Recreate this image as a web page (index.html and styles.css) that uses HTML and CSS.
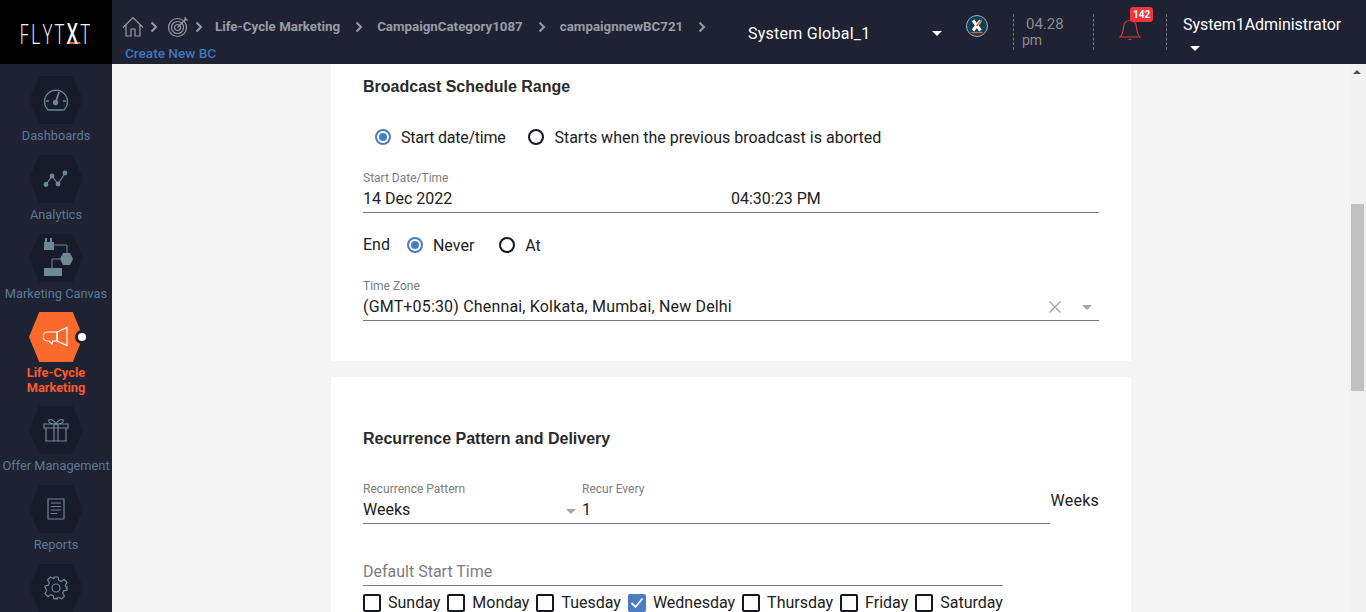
FILE: index.html
```html
<!DOCTYPE html>
<html>
<head>
  <title>Create New BC</title>
  <link rel="stylesheet" href="styles.css">
</head>
<body>
  <header class="topbar">
    <div class="logo"><span class="logo-text">FLYT<span class="logo-x">X</span>T</span></div>
    <div class="crumbs">
      <div class="crumb-row">
        <svg class="crumb-icon" width="22" height="22" viewBox="0 0 22 22" fill="none" stroke="#9a9ca3" stroke-width="1.2"><path d="M1 11.5 11 1.5l10 10"/><path d="M4 9v11h5v-7h4v7h5V9"/></svg>
        <svg class="chev" width="8" height="12" viewBox="0 0 8 12" fill="none" stroke="#9a9ca3" stroke-width="2"><path d="m1.5 1.5 4.5 4.5-4.5 4.5"/></svg>
        <svg class="crumb-icon target" width="22" height="22" viewBox="0 0 22 22" fill="none" stroke="#9a9ca3" stroke-width="1.2"><circle cx="10.5" cy="11.5" r="9"/><circle cx="10.5" cy="11.5" r="6"/><circle cx="10.5" cy="11.5" r="3"/><path d="m10.5 11.5 9-9M18 1v3h3"/></svg>
        <svg class="chev" width="8" height="12" viewBox="0 0 8 12" fill="none" stroke="#9a9ca3" stroke-width="2"><path d="m1.5 1.5 4.5 4.5-4.5 4.5"/></svg>
        <span class="crumb first">Life-Cycle Marketing</span>
        <svg class="chev" width="8" height="12" viewBox="0 0 8 12" fill="none" stroke="#9a9ca3" stroke-width="2"><path d="m1.5 1.5 4.5 4.5-4.5 4.5"/></svg>
        <span class="crumb">CampaignCategory1087</span>
        <svg class="chev" width="8" height="12" viewBox="0 0 8 12" fill="none" stroke="#9a9ca3" stroke-width="2"><path d="m1.5 1.5 4.5 4.5-4.5 4.5"/></svg>
        <span class="crumb">campaignnewBC721</span>
        <svg class="chev" width="8" height="12" viewBox="0 0 8 12" fill="none" stroke="#9a9ca3" stroke-width="2"><path d="m1.5 1.5 4.5 4.5-4.5 4.5"/></svg>
      </div>
      <div class="page-title">Create New BC</div>
    </div>
    <div class="org">
      <span>System Global_1</span>
      <span class="caret white"></span>
    </div>
    <div class="x-badge">
      <svg width="22" height="22" viewBox="0 0 22 22" fill="none"><path d="m7 5.5 7.5 10M14.500 5.5l-7.500 10" stroke="#fff" stroke-width="3"/><path d="m15.500 5-5 6" stroke="#e8622c" stroke-width="1.6"/><path d="M5.500 17.500h11" stroke="#e8622c" stroke-width="1.3"/></svg>
    </div>
    <div class="clock">
      <span class="clock-time">04.28</span>
      <span>pm</span>
    </div>
    <div class="bell">
      <svg width="24" height="26" viewBox="0 0 24 26" fill="none" stroke="#d9363e" stroke-width="1.2"><path d="M2 21c3-3 3-5 3.5-10 .5-4 3-6.5 6.5-6.5s6 2.500 6.500 6.500c.5 5 .5 7 3.500 10z"/><path d="M10.500 23.500h3"/></svg>
      <span class="badge">142</span>
    </div>
    <div class="user">
      <span>System1Administrator</span>
      <span class="caret white"></span>
    </div>
  </header>

  <div class="layout">
    <nav class="sidebar">
      <a class="nav-item">
        <span class="hex"><svg width="26" height="26" viewBox="0 0 26 26" fill="none" stroke="#6f8796" stroke-width="1.3"><path d="M5 23a11.500 11.500 0 1 1 16 0z"/><path d="M13 14.500 16 5" stroke-width="1.8"/><circle cx="12.500" cy="15.500" r="2" fill="#6f8796"/><path d="M3 14h3M20 14h3"/></svg></span>
        <span class="nav-label">Dashboards</span>
      </a>
      <a class="nav-item">
        <span class="hex"><svg width="26" height="26" viewBox="0 0 26 26" fill="#6f8796" stroke="#6f8796" stroke-width="1.2"><path d="M3 18.500 9 10l6 8 7-11" fill="none"/><circle cx="3" cy="18.500" r="1.8"/><circle cx="9" cy="10" r="1.8"/><circle cx="15" cy="18" r="1.8"/><circle cx="22" cy="7" r="1.8"/></svg></span>
        <span class="nav-label">Analytics</span>
      </a>
      <a class="nav-item">
        <span class="hex"><svg width="34" height="40" viewBox="0 0 34 40" fill="#6f8796"><path d="M5 4h10v8H5zM6 0h2v4H6zM11 0h2v4h-2z"/><path d="M15 7h13v8M21 21h-8v9" fill="none" stroke="#6f8796"/><path d="M24 15h7l3 6-3 6h-7l-3-6z"/><path d="M5 30h18v8H5z"/></svg></span>
        <span class="nav-label">Marketing Canvas</span>
      </a>
      <a class="nav-item active">
        <span class="hex"><svg width="26" height="22" viewBox="0 0 26 22" fill="none" stroke="#fff" stroke-width="1.2"><path d="M14 6H4.500a4 4 0 0 0 0 9H6l3 3 .5-3H14z"/><path d="m14 6 10-4.500v18L14 15z"/></svg><i class="nav-dot"></i></span>
        <span class="nav-label">Life-Cycle<br>Marketing</span>
      </a>
      <a class="nav-item">
        <span class="hex"><svg width="26" height="24" viewBox="0 0 26 24" fill="none" stroke="#6f8796" stroke-width="1.2"><path d="M1 6h24v4H1zM3 10v13h20V10M11 6v17h4V6"/><path d="M13 6C10 0 4 1 6 4c1 1.500 4 2 7 2 3 0 6-.5 7-2 2-3-4-4-7 2z"/></svg></span>
        <span class="nav-label">Offer Management</span>
      </a>
      <a class="nav-item">
        <span class="hex"><svg width="18" height="22" viewBox="0 0 18 22" fill="none" stroke="#6f8796" stroke-width="1.2"><path d="M1 1h16v20H1zM4 5h10M4 8.500h10M4 12h10M4 15.500h6"/></svg></span>
        <span class="nav-label">Reports</span>
      </a>
      <a class="nav-item">
        <span class="hex"><svg width="24" height="24" viewBox="0 0 24 24" fill="none" stroke="#6f8796" stroke-width="1.2"><circle cx="12" cy="12" r="4"/><path d="M10 1h4l.8 3.300 2.500 1 2.900-1.700 2.800 2.800-1.700 2.900 1 2.500L23 11v3l-3.300.8-1 2.500 1.700 2.900-2.800 2.800-2.900-1.700-2.500 1L14 23h-4l-.8-3.300-2.500-1-2.900 1.700L1 17.600l1.700-2.900-1-2.500L1 11v-1l3.300-.8 1-2.500-1.700-2.900L6.400 1l2.900 1.700 .7-.3z"/></svg></span>
      </a>
    </nav>

    <main class="content">
      <section class="card card-schedule">
        <h2 class="card-title">Broadcast Schedule Range</h2>

        <div class="radio-row start-row">
          <label class="radio on"><i></i><span class="tight">Start date/time</span></label>
          <label class="radio"><i></i>Starts when the previous broadcast is aborted</label>
        </div>

        <div class="field date-field">
          <span class="field-label">Start Date/Time</span>
          <div class="field-value date-values">
            <span class="date-part">14 Dec 2022</span>
            <span>04:30:23 PM</span>
          </div>
        </div>

        <div class="radio-row end-row">
          <span class="end-label">End</span>
          <label class="radio on"><i></i>Never</label>
          <label class="radio"><i></i>At</label>
        </div>

        <div class="field zone-field">
          <span class="field-label">Time Zone</span>
          <div class="field-value">
            <span class="grow zone-text">(GMT+05:30) Chennai, Kolkata, Mumbai, New Delhi</span>
            <svg class="clear" width="12" height="12" viewBox="0 0 12 12" stroke="#a6a6a6" stroke-width="1.4"><path d="m.5.500 11 11M11.500.500l-11 11"/></svg>
            <span class="caret grey"></span>
          </div>
        </div>
      </section>

      <section class="card card-recurrence">
        <h2 class="card-title">Recurrence Pattern and Delivery</h2>

        <div class="recur-row">
          <div class="recur-fields">
            <div class="field pattern-field">
              <span class="field-label">Recurrence Pattern</span>
              <div class="field-value">
                <span class="grow">Weeks</span>
                <span class="caret grey"></span>
              </div>
            </div>
            <div class="field every-field">
              <span class="field-label">Recur Every</span>
              <div class="field-value">1</div>
            </div>
          </div>
          <span class="unit">Weeks</span>
        </div>

        <div class="default-time">Default Start Time</div>

        <div class="days">
          <label class="day"><i></i>Sunday</label>
          <label class="day"><i></i>Monday</label>
          <label class="day"><i></i>Tuesday</label>
          <label class="day on"><i><svg width="14" height="12" viewBox="0 0 14 12" fill="none" stroke="#fff" stroke-width="1.8"><path d="m1.500 6 4 4 7-8.500"/></svg></i>Wednesday</label>
          <label class="day"><i></i>Thursday</label>
          <label class="day"><i></i>Friday</label>
          <label class="day"><i></i>Saturday</label>
        </div>
      </section>
    </main>

    <div class="scrollbar">
      <span class="scroll-arrow"></span>
      <span class="scroll-thumb"></span>
    </div>
  </div>
</body>
</html>
```

FILE: styles.css
```css
* {
  box-sizing: border-box;
}

html,
body {
  margin: 0;
  height: 612px;
  overflow: hidden;
}

body {
  background-color: #f5f5f5;
  color: #212121;
  font-family: Roboto, "Liberation Sans", sans-serif;
  font-size: 16px;
}

/* Top bar */
.topbar {
  display: flex;
  height: 64px;
  background-color: #1e2233;
  color: #fff;
}

.logo {
  display: flex;
  justify-content: center;
  width: 112px;
  flex: none;
  padding-top: 16px;
  background-color: #000;
  font-family: "Open Sans", "Liberation Sans", sans-serif;
  font-size: 28px;
  font-weight: 300;
  line-height: 34px;
  white-space: nowrap;
}

.logo-text {
  display: block;
  height: 34px;
  letter-spacing: 4px;
  transform: scaleX(.64);
}

.logo-x {
  display: inline-block;
  height: 28px;
  font-weight: 600;
  line-height: 34px;
  border-bottom: 2px solid #e8622c;
}

.crumbs {
  width: 608px;
  flex: none;
  padding: 15px 0 0 10px;
}

.crumb-row {
  display: flex;
  align-items: center;
  height: 23px;
}

.chev {
  margin-left: 6px;
  flex: none;
}

.target {
  margin-left: 9px;
}

.crumb {
  margin-left: 14px;
  color: #9a9ca3;
  font-size: 13.33px;
  font-weight: 700;
  white-space: nowrap;
}

.crumb.first {
  margin-left: 12px;
}

.crumb + .chev {
  margin-left: 15px;
}

.page-title {
  margin: 7px 0 0 3px;
  color: #3f76bd;
  font-size: 13.6px;
  font-weight: 500;
}

.org {
  display: flex;
  align-items: center;
  width: 196px;
  height: 64px;
  flex: none;
  padding: 2px 0 0 28px;
  font-size: 16px;
  letter-spacing: .25px;
}

.org span:first-child {
  width: 184px;
  flex: none;
}

.caret {
  display: inline-block;
  width: 0;
  height: 0;
  flex: none;
  border-left: 5px solid transparent;
  border-right: 5px solid transparent;
}

.caret.white {
  border-top: 5px solid #fff;
}

.caret.grey {
  border-top: 5px solid #a6a6a6;
}

.x-badge {
  width: 22px;
  height: 22px;
  flex: none;
  margin: 15px 0 0 50px;
  border: 1px solid #9fb4bd;
  border-radius: 50%;
  background-color: #123f55;
}

.x-badge svg {
  display: block;
  margin: -1px;
}

.clock {
  display: flex;
  flex-direction: column;
  width: 81px;
  height: 36px;
  flex: none;
  margin: 14px 0 0 25px;
  padding: 2px 0 0 8px;
  border-left: 1px dashed #70727c;
  border-right: 1px dashed #70727c;
  color: #8b8d94;
  font-size: 14px;
  line-height: 16px;
}

.clock-time {
  padding-left: 4px;
  font-size: 15px;
}

.bell {
  position: relative;
  width: 73px;
  height: 36px;
  flex: none;
  margin-top: 14px;
  padding: 2px 0 0 24px;
  border-right: 1px dashed #70727c;
}

.badge {
  position: absolute;
  top: -7px;
  left: 36px;
  padding: 0 3px;
  border-radius: 3px;
  background-color: #f0353d;
  color: #fff;
  font-size: 10px;
  font-weight: 700;
  line-height: 15px;
}

.user {
  display: flex;
  flex-direction: column;
  align-items: flex-start;
  padding: 15px 0 0 16px;
  font-size: 16px;
  letter-spacing: -.05px;
  white-space: nowrap;
}

.user .caret {
  margin: 12px 0 0 7px;
}

/* Page body */
.layout {
  display: flex;
  height: 548px;
}

.sidebar {
  width: 112px;
  flex: none;
  padding-top: 12px;
  background-color: #1e2233;
  overflow: hidden;
}

.nav-item {
  display: block;
  height: 79px;
  text-align: center;
}

.nav-item.active {
  height: 94px;
}

.hex {
  position: relative;
  display: flex;
  align-items: center;
  justify-content: center;
  width: 54px;
  height: 48px;
  margin: 0 auto;
}

.hex::before {
  content: "";
  position: absolute;
  top: 0;
  left: 0;
  width: 100%;
  height: 100%;
  background-color: #181b2a;
  clip-path: polygon(19% 0, 81% 0, 100% 50%, 81% 100%, 19% 100%, 0 50%);
}

.hex svg {
  position: relative;
}

.nav-item.active .hex {
  height: 50px;
  margin-top: -1px;
}

.nav-item.active .hex::before {
  background-color: #fb6a2c;
}

.nav-label {
  display: block;
  margin-top: 4px;
  color: #5d7a94;
  font-size: 12.8px;
  line-height: 15px;
  white-space: nowrap;
}

.nav-item.active .nav-label {
  margin-top: 3px;
  color: #fb5a2c;
  font-weight: 700;
}

.nav-dot {
  position: absolute;
  top: 21px;
  right: -3px;
  width: 8px;
  height: 8px;
  border-radius: 50%;
  background-color: #fff;
  box-shadow: 0 0 0 3px #1e2233;
}

.content {
  flex: 1;
  min-width: 0;
  overflow: hidden;
}

.card {
  width: 800px;
  margin: 0 0 16px 219px;
  padding: 0 32px;
  background-color: #fff;
}

.card-schedule {
  height: 297px;
  padding-top: 13px;
}

.card-recurrence {
  padding-top: 52px;
  height: 300px;
}

.card-title {
  margin: 0;
  color: #2a2a2a;
  font-family: "Liberation Sans", Arial, sans-serif;
  font-size: 16px;
  font-weight: 700;
  line-height: 19px;
}

.radio-row {
  display: flex;
  align-items: center;
}

.start-row {
  margin: 31px 0 0 12px;
  gap: 23px;
  height: 20px;
}

.tight {
  letter-spacing: -.25px;
}

.radio {
  display: flex;
  align-items: center;
  gap: 10px;
}

.radio i {
  position: relative;
  width: 16px;
  height: 16px;
  border: 2px solid #15161f;
  border-radius: 50%;
}

.radio.on i {
  border-color: #4a7cc4;
}

.radio.on i::after {
  content: "";
  position: absolute;
  top: 2px;
  left: 2px;
  width: 8px;
  height: 8px;
  border-radius: 50%;
  background-color: #4a7cc4;
}

.field {
  border-bottom: 1px solid #7a7a7a;
}

.field-label {
  display: block;
  color: #7d7d7d;
  font-size: 12px;
  line-height: 14px;
}

.field-value {
  display: flex;
  align-items: center;
  height: 20px;
  margin-top: 4px;
  line-height: 20px;
}

.date-field {
  margin-top: 24px;
  height: 42px;
}

.date-part {
  width: 368px;
}

.end-row {
  margin-top: 22px;
  height: 20px;
}

.end-label {
  margin: -1px 17px 0 0;
}

.end-row .radio + .radio {
  margin-left: 25px;
}

.end-row .radio {
  gap: 10px;
}

.zone-field {
  margin-top: 24px;
  height: 42px;
}

.zone-text {
  letter-spacing: .17px;
}

.grow {
  flex: 1;
}

.clear {
  margin-right: 27px;
}

.zone-field .clear {
  margin-right: 21px;
}

.zone-field .caret {
  margin-right: 7px;
}

.recur-row {
  display: flex;
  align-items: flex-end;
  margin-top: 34px;
}

.recur-fields {
  display: flex;
  width: 687px;
  border-bottom: 1px solid #7a7a7a;
}

.recur-fields .field {
  border-bottom: 0;
  height: 41px;
}

.pattern-field {
  width: 215px;
  flex: none;
}

.pattern-field .caret {
  margin-top: 2px;
  margin-right: 2px;
}

.every-field {
  flex: 1;
  margin-left: 4px;
}

.unit {
  margin: 0 0 14px auto;
  letter-spacing: .25px;
}

.default-time {
  width: 640px;
  margin-top: 38px;
  padding-bottom: 3px;
  border-bottom: 1px solid #7a7a7a;
  color: #7d7d7d;
  line-height: 20px;
}

.days {
  display: flex;
  justify-content: space-between;
  width: 640px;
  margin-top: 7px;
}

.day {
  display: flex;
  align-items: center;
  gap: 7px;
  line-height: 20px;
}

.day i {
  display: flex;
  align-items: center;
  justify-content: center;
  width: 18px;
  height: 18px;
  border: 2px solid #15161f;
  border-radius: 2px;
}

.day.on i {
  border-color: #4a7cc4;
  background-color: #4a7cc4;
}

/* Scrollbar */
.scrollbar {
  position: relative;
  width: 17px;
  flex: none;
  background-color: #f1f1f1;
}

.scroll-arrow {
  position: absolute;
  top: 6px;
  left: 4px;
  width: 0;
  height: 0;
  border-left: 4px solid transparent;
  border-right: 4px solid transparent;
  border-bottom: 4px solid #505050;
}

.scroll-thumb {
  position: absolute;
  top: 140px;
  left: 2px;
  width: 13px;
  height: 187px;
  background-color: #c1c1c1;
}
```
